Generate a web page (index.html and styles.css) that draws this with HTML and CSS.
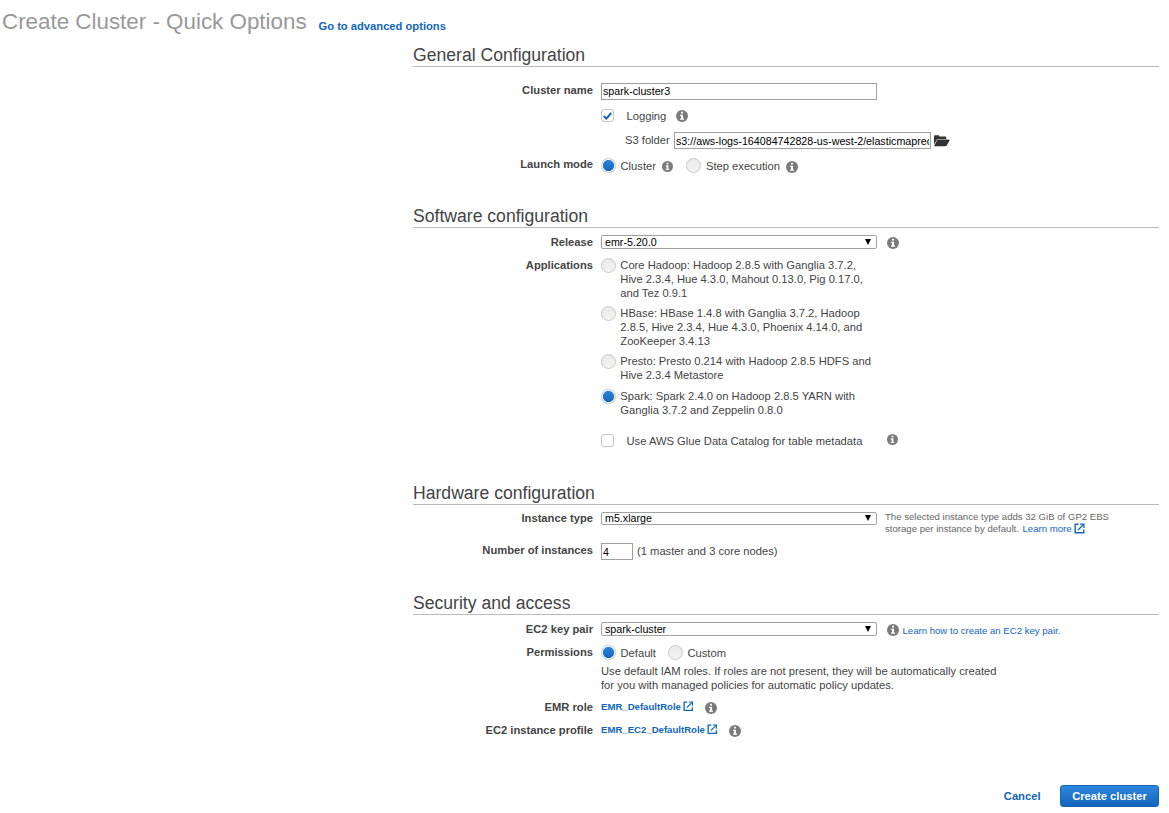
FILE: index.html
```html
<!DOCTYPE html>
<html lang="en">
<head>
<meta charset="utf-8">
<title>Create Cluster - Quick Options</title>
<link rel="stylesheet" href="styles.css">
</head>
<body>
<svg class="defs" width="0" height="0">
  <symbol id="info" viewBox="0 0 12 12"><circle cx="6" cy="6" r="6" fill="#7b7b7b"/><path fill="#fff" d="M5 1.800h2v1.800H5zM4 4.700h3v3.900h1v1.200H4V8.600h1V5.900H4z"/></symbol>
  <symbol id="ext" viewBox="0 0 11 11"><path fill="none" stroke="#1166bb" stroke-width="1.400" d="M4.500 1.200H1.200v8.600h8.600V6.500"/><path fill="none" stroke="#1166bb" stroke-width="1.300" d="M4 7l5.500-5.500"/><path fill="#1166bb" d="M6 .4h4.600V5H9.300V1.700H6z"/></symbol>
</svg>

<header class="page-head">
  <h1>Create Cluster - Quick Options</h1>
  <a class="advanced">Go to advanced options</a>
</header>

<main class="form">
  <section class="general">
    <h2>General Configuration</h2>
    <div class="row r-name"><label>Cluster name</label><div class="field"><input class="text wide" type="text" value="spark-cluster3"></div></div>
    <div class="row r-log"><label></label><div class="field"><span class="check"><svg width="9" height="8" viewBox="0 0 9 8"><path d="M.8 4l2.500 2.600L8.200 1" fill="none" stroke="#1166bb" stroke-width="2"/></svg></span><span class="check-text">Logging</span><svg class="info i-log"><use href="#info"/></svg></div></div>
    <div class="row r-s3"><label></label><div class="field"><span class="s3-label">S3 folder</span><input class="text s3" type="text" value="s3://aws-logs-164084742828-us-west-2/elasticmapreduce/"><svg class="folder" width="16" height="12" viewBox="0 0 16 12"><path fill="#333" d="M0 9.500V1.200Q0 .3 1 .3h3.500q.8 0 .8.900v.4h5.900q1 0 1 1V4H4.500q-1.200 0-1.800 1z"/><path fill="#333" d="M4.300 4.600H15q1 0 .5.800l-2.700 5.100q-.4.700-1.300.7H.8q-.9 0-.4-.8L3 5.300Q3.400 4.600 4.300 4.600z"/></svg></div></div>
    <div class="row r-launch"><label>Launch mode</label><div class="field"><span class="radio on"></span><span class="radio-text">Cluster</span><svg class="info small i-cluster"><use href="#info"/></svg><span class="radio step"></span><span class="radio-text">Step execution</span><svg class="info i-step"><use href="#info"/></svg></div></div>
  </section>

  <section class="software">
    <h2>Software configuration</h2>
    <div class="row r-release"><label>Release</label><div class="field"><span class="select">emr-5.20.0<i></i></span><svg class="info i-release"><use href="#info"/></svg></div></div>
    <div class="row r-apps"><label>Applications</label>
      <div class="apps">
        <div class="app"><span class="radio"></span><p>Core Hadoop: Hadoop 2.8.5 with Ganglia 3.7.2,<br>Hive 2.3.4, Hue 4.3.0, Mahout 0.13.0, Pig 0.17.0,<br>and Tez 0.9.1</p></div>
        <div class="app"><span class="radio"></span><p>HBase: HBase 1.4.8 with Ganglia 3.7.2, Hadoop<br>2.8.5, Hive 2.3.4, Hue 4.3.0, Phoenix 4.14.0, and<br>ZooKeeper 3.4.13</p></div>
        <div class="app presto"><span class="radio"></span><p>Presto: Presto 0.214 with Hadoop 2.8.5 HDFS and<br>Hive 2.3.4 Metastore</p></div>
        <div class="app"><span class="radio on"></span><p>Spark: Spark 2.4.0 on Hadoop 2.8.5 YARN with<br>Ganglia 3.7.2 and Zeppelin 0.8.0</p></div>
      </div>
    </div>
    <div class="row r-glue"><label></label><div class="field"><span class="check"></span><span class="check-text glue-text">Use AWS Glue Data Catalog for table metadata</span><svg class="info small i-glue"><use href="#info"/></svg></div></div>
  </section>

  <section class="hardware">
    <h2>Hardware configuration</h2>
    <div class="row r-type"><label>Instance type</label><div class="field"><span class="select short">m5.xlarge<i></i></span><p class="note">The selected instance type adds 32 GiB of GP2 EBS<br>storage per instance by default. <a>Learn more</a> <svg class="ext big"><use href="#ext"/></svg></p></div></div>
    <div class="row r-count"><label>Number of instances</label><div class="field"><input class="text count" type="text" value="4"><span class="nodes">(1 master and 3 core nodes)</span></div></div>
  </section>

  <section class="security">
    <h2>Security and access</h2>
    <div class="row r-key"><label>EC2 key pair</label><div class="field"><span class="select">spark-cluster<i></i></span><svg class="info i-key"><use href="#info"/></svg><a class="small-link">Learn how to create an EC2 key pair.</a></div></div>
    <div class="row r-perm"><label>Permissions</label><div class="field"><span class="radio on"></span><span class="radio-text">Default</span><span class="radio custom"></span><span class="radio-text">Custom</span></div></div>
    <div class="row r-desc"><label></label><p>Use default IAM roles. If roles are not present, they will be automatically created<br>for you with managed policies for automatic policy updates.</p></div>
    <div class="row r-emr"><label>EMR role</label><div class="field"><a class="role">EMR_DefaultRole</a><svg class="ext"><use href="#ext"/></svg><svg class="info i-role"><use href="#info"/></svg></div></div>
    <div class="row r-ec2"><label>EC2 instance profile</label><div class="field"><a class="role">EMR_EC2_DefaultRole</a><svg class="ext"><use href="#ext"/></svg><svg class="info i-role"><use href="#info"/></svg></div></div>
  </section>

  <footer class="actions"><a class="cancel">Cancel</a><button type="button">Create cluster</button></footer>
</main>
</body>
</html>
```
FILE: styles.css
```css
* { box-sizing: border-box; }
body { margin: 0; background: #fff; color: #444; font: 11.2px/14px "Liberation Sans", Arial, sans-serif; overflow: hidden; }
h1, h2, p { margin: 0; font-weight: 400; }
a { color: #1166bb; }
svg { display: block; flex: none; }
.defs { display: none; }

.page-head { display: flex; height: 46px; padding-left: 2px; }
h1 { width: 316.500px; margin-top: 9px; font-size: 22.400px; line-height: 26px; color: #999; letter-spacing: -0.010px; white-space: nowrap; }
.advanced { margin-top: 19px; font-weight: 700; }

.form { width: 746px; margin-left: 413px; }
h2 { height: 21px; border-bottom: 1px solid #bbb; font-size: 17.600px; line-height: 18px; color: #444; }
.general { height: 161px; }
.software { height: 277px; }
.hardware { height: 110px; }
.security { height: 191px; }

.row { display: grid; grid-template-columns: 180px 1fr; column-gap: 8px; align-items: start; white-space: nowrap; }
.row label { text-align: right; font-weight: 700; }
.field { display: flex; align-items: flex-start; }
.r-name { height: 26px; margin-top: 16px; }
.r-log { height: 24px; }
.r-s3 { height: 24px; }
.r-release { height: 23px; margin-top: 7px; }
.r-apps { height: 176px; }
.r-type { height: 32px; margin-top: 6px; }
.r-key { height: 23px; margin-top: 7px; }
.r-perm { height: 19px; }
.r-desc { height: 36px; }
.r-emr { height: 23px; }

.text { height: 17px; padding: 0 1px; border: 1px solid #a0a0a0; border-radius: 0; background: #fff; color: #000; font: 10.700px "Liberation Sans", Arial, sans-serif; outline: 0; }
.wide { width: 276px; padding-bottom: 2px; }
.s3-label { width: 49px; margin-left: 24px; }
.s3 { width: 257px; margin-top: -1px; }
.folder { margin: 2px 0 0 3px; }
.count { width: 32px; }
.nodes { margin: 1px 0 0 4px; }

.select { display: flex; flex: none; justify-content: space-between; align-items: center; width: 276px; height: 14px; padding: 0 5px 0 3px; border: 1px solid #a0a0a0; border-radius: 2px; color: #000; font-size: 10.700px; line-height: 12px; }
.select.short { height: 13px; margin-top: 1px; line-height: 11px; padding-bottom: 1px; }
.select i { border: solid transparent; border-width: 6px 3.500px 0; border-top-color: #000; margin-top: -1px; }

.check { display: flex; flex: none; justify-content: center; align-items: center; width: 13px; height: 13px; border: 1px solid #c4c4c4; border-radius: 3px; }
.check-text { margin-left: 12.500px; }
.radio { flex: none; width: 15px; height: 15px; border: 1px solid #c8c8c8; border-radius: 50%; background: linear-gradient(#e9e9e9, #f4f4f4); }
.radio.on { background: radial-gradient(circle, transparent 5.300px, #fff 5.900px), linear-gradient(#2e86dd, #1166bb); }
.radio-text { margin-left: 4.500px; }

.info { width: 12px; height: 12px; }
.info.small { width: 11px; height: 11px; }
.ext { width: 10.500px; height: 10.500px; margin: 1px 0 0 2px; }

.i-log { margin: 1px 0 0 10px; }
.r-launch .radio { margin-top: 1px; }
.r-launch .radio-text { margin-top: 2px; }
.i-cluster { margin: 4px 0 0 6px; }
.r-launch .step { margin-left: 13.500px; }
.i-step { margin: 4px 0 0 6px; }
.i-release { margin: 2px 0 0 10px; }

.app { display: flex; margin-bottom: 6px; }
.app.presto { margin-bottom: 7px; }
.app p { margin-left: 4.300px; }
.glue-text { flex: none; width: 260px; }

.note { margin-left: 8px; font-size: 9.600px; line-height: 12px; color: #666; }
.note a { margin-left: 1px; }
.ext.big { display: inline-block; width: 11px; height: 11px; margin: 0 0 -2px; vertical-align: baseline; }
.i-key { margin: 2px 0 0 10px; }
.small-link { margin: 2px 0 0 3.500px; font-size: 9.600px; }
.r-perm .radio-text { margin-top: 1px; }
.r-perm .custom { margin-left: 12px; }
.role { font-size: 9.600px; font-weight: 700; }
.i-role { margin: 2px 0 0 12px; }

.actions { display: flex; justify-content: flex-end; align-items: flex-start; }
.cancel { margin: 4px 19.500px 0 0; font-weight: 700; }
button { width: 99px; height: 22px; padding: 0; border: 1px solid #1166bb; border-radius: 3px; background: linear-gradient(#2e86dd, #1166bb); color: #fff; font: 700 11.200px "Liberation Sans", Arial, sans-serif; }
```
